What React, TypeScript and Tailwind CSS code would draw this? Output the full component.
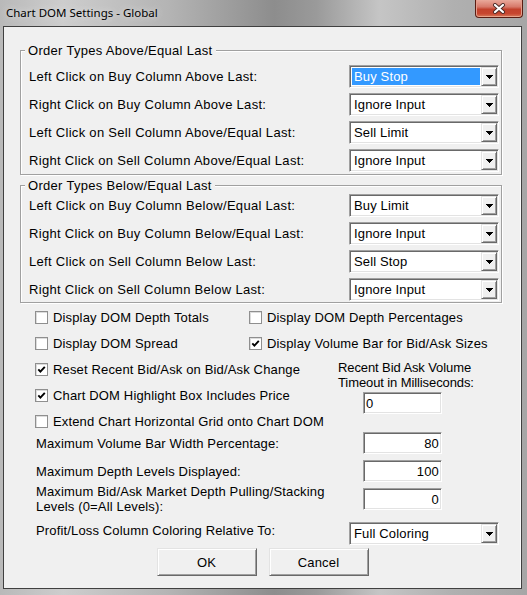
import clsx from "clsx"
import type { ReactNode } from "react"

// classic 3d edges used by the win32 controls
const sunken =
  "border border-t-[#a0a0a0] border-l-[#a0a0a0] border-r-white border-b-white shadow-[inset_1px_1px_0_#696969,inset_-1px_-1px_0_#e3e3e3]"
const raised =
  "border border-t-[#e3e3e3] border-l-[#e3e3e3] border-r-[#696969] border-b-[#696969] shadow-[inset_1px_1px_0_#fff,inset_-1px_-1px_0_#a0a0a0]"

const DownArrow = () => (
  <svg width="7" height="4" viewBox="0 0 7 4" shapeRendering="crispEdges">
    <path d="M0 0h7v1h-1v1h-1v1h-1v1h-1v-1h-1v-1h-1v-1h-1z" fill="#000" />
  </svg>
)

const Dropdown = ({ value, active }: { value: string; active?: boolean }) => (
  <div className={clsx("flex h-[23px] w-[150px] bg-white p-[1px] tracking-[0.15px]", sunken)}>
    <div className="flex flex-1 p-[1px]">
      <div
        className={clsx(
          "flex flex-1 items-center pl-[2px] leading-[15px]",
          active ? "bg-[#3399ff] text-white" : "text-black",
        )}
      >
        {value}
      </div>
    </div>
    <div className={clsx("flex w-[16px] items-center justify-center bg-[#f0f0f0]", raised)}>
      <DownArrow />
    </div>
  </div>
)

const NumberBox = ({ value, left }: { value: string; left?: boolean }) => (
  <div
    className={clsx(
      "flex h-[22px] w-[79px] items-center bg-white px-[2px] leading-[15px]",
      left ? "justify-start" : "justify-end",
      sunken,
    )}
  >
    {value}
  </div>
)

const Check = ({ label, checked }: { label: string; checked?: boolean }) => (
  <div className="flex items-center gap-[5px]">
    <span className="flex h-[13px] w-[13px] shrink-0 items-center justify-center border border-[#8f8f8f] bg-white shadow-[inset_1px_1px_0_#dcdcdc]">
      {checked && (
        <svg width="9" height="9" viewBox="0 0 9 9">
          <polyline points="1.3,4.3 3.4,6.6 7.8,1.8" fill="none" stroke="#000" strokeWidth="1.9" />
        </svg>
      )}
    </span>
    <span className="leading-[15px]">{label}</span>
  </div>
)

const Group = ({ title, className, children }: { title: string; className?: string; children: ReactNode }) => (
  <div
    className={clsx(
      "relative ml-[16px] flex w-[482px] flex-col gap-[5px] border border-[#a0a0a0] shadow-[inset_1px_1px_0_#fff,1px_1px_0_#fff]",
      className,
    )}
  >
    <span className="absolute -top-[8px] left-[4px] bg-[#f0f0f0] px-[3px] leading-[15px] tracking-[0.3px]">
      {title}
    </span>
    {children}
  </div>
)

const OrderRow = ({ label, value, active }: { label: string; value: string; active?: boolean }) => (
  <div className="flex items-center">
    <span className="w-[328px] pl-[8px] leading-[15px] tracking-[0.3px]">{label}</span>
    <Dropdown value={value} active={active} />
  </div>
)

const above = [
  ["Left Click on Buy Column Above Last:", "Buy Stop"],
  ["Right Click on Buy Column Above Last:", "Ignore Input"],
  ["Left Click on Sell Column Above/Equal Last:", "Sell Limit"],
  ["Right Click on Sell Column Above/Equal Last:", "Ignore Input"],
]

const below = [
  ["Left Click on Buy Column Below/Equal Last:", "Buy Limit"],
  ["Right Click on Buy Column Below/Equal Last:", "Ignore Input"],
  ["Left Click on Sell Column Below Last:", "Sell Stop"],
  ["Right Click on Sell Column Below Last:", "Ignore Input"],
]

const DialogButton = ({ children }: { children: ReactNode }) => (
  <button className={clsx("h-[28px] w-[100px] bg-[#f0f0f0] leading-[15px] text-black", raised)}>{children}</button>
)

export default function App() {
  return (
    <div className="flex h-[595px] w-[527px] flex-col overflow-hidden bg-[linear-gradient(90deg,#b9b9b9_0%,#cdcdcd_12%,#b4b4b4_32%,#8d8d8d_52%,#9a9a9a_60%,#c5c5c5_72%,#b0b0b0_86%,#a6a6a6_100%)] font-[family-name:'Liberation_Sans',Arial,sans-serif] text-[13px] tracking-[0.15px] text-black">
      {/* title bar */}
      <div className="flex h-[26px] shrink-0 items-start justify-between pl-[6px] pr-[4px]">
        <span className="pt-[5px] font-[family-name:'Noto_Sans',sans-serif] text-[11.5px] leading-[16px] tracking-normal [text-shadow:0_0_6px_#e8e8e8]">
          Chart DOM Settings - Global
        </span>
        <div className="flex h-[18px] w-[48px] items-center justify-center rounded-b-[4px] border border-t-0 border-[#5a1c12] bg-[linear-gradient(180deg,#e9a99b_0%,#d7796a_40%,#c2412c_55%,#c7462f_80%,#d77a5c_100%)] shadow-[inset_0_-1px_0_#e8a38a,inset_1px_0_0_#e39c8c,inset_-1px_0_0_#e39c8c]">
          <svg width="14" height="11" viewBox="0 0 14 11">
            <path d="M3 2l8 7M11 2l-8 7" stroke="#4a2a26" strokeWidth="4" strokeLinecap="round" />
            <path d="M3 2l8 7M11 2l-8 7" stroke="#fff" strokeWidth="2.2" strokeLinecap="round" />
          </svg>
        </div>
      </div>

      {/* client area */}
      <div className="mb-[6px] ml-[3px] mr-[5px] flex flex-1 flex-col border border-[#404040] bg-[#f0f0f0] shadow-[inset_-1px_0_0_#fafafa]">
        <Group title="Order Types Above/Equal Last" className="mt-[23px] pb-[2px] pt-[14px]">
          {above.map(([label, value], i) => (
            <OrderRow key={label} label={label} value={value} active={i === 0} />
          ))}
        </Group>

        <Group title="Order Types Below/Equal Last" className="mt-[10px] pb-[1px] pt-[8px]">
          {below.map(([label, value]) => (
            <OrderRow key={label} label={label} value={value} />
          ))}
        </Group>

        {/* check options */}
        <div className="ml-[31px] mt-[1px] flex flex-col">
          <div className="flex h-[26px] items-center">
            <div className="w-[214px]">
              <Check label="Display DOM Depth Totals" />
            </div>
            <Check label="Display DOM Depth Percentages" />
          </div>
          <div className="flex h-[26px] items-center">
            <div className="w-[214px]">
              <Check label="Display DOM Spread" />
            </div>
            <Check label="Display Volume Bar for Bid/Ask Sizes" checked />
          </div>
          <div className="flex">
            <div className="flex w-[303px] flex-col">
              <div className="flex h-[26px] items-center">
                <Check label="Reset Recent Bid/Ask on Bid/Ask Change" checked />
              </div>
              <div className="flex h-[26px] items-center">
                <Check label="Chart DOM Highlight Box Includes Price" checked />
              </div>
              <div className="h-[22px] pt-[7px]">
                <div className="flex h-[13px] items-center">
                  <Check label="Extend Chart Horizontal Grid onto Chart DOM" />
                </div>
              </div>
            </div>
            <div className="flex flex-col pt-[4px] leading-[15px] tracking-[-0.1px]">
              <span>Recent Bid Ask Volume</span>
              <span>Timeout in Milliseconds:</span>
              <div className="ml-[25px] mt-[2px]">
                <NumberBox value="0" left />
              </div>
            </div>
          </div>
        </div>

        {/* numeric settings */}
        <div className="ml-[32px] flex flex-col gap-[2px] leading-[15px]">
          <div className="flex h-[26px] items-center">
            <span className="w-[327px]">Maximum Volume Bar Width Percentage:</span>
            <NumberBox value="80" />
          </div>
          <div className="flex h-[26px] items-center">
            <span className="w-[327px]">Maximum Depth Levels Displayed:</span>
            <NumberBox value="100" />
          </div>
          <div className="flex h-[26px] items-center">
            <span className="w-[327px]">
              Maximum Bid/Ask Market Depth Pulling/Stacking
              <br />
              Levels (0=All Levels):
            </span>
            <NumberBox value="0" />
          </div>
          <div className="mt-[8px] flex items-start">
            <span className="w-[313px] pt-[1px]">Profit/Loss Column Coloring Relative To:</span>
            <Dropdown value="Full Coloring" />
          </div>
        </div>

        <div className="mt-[3px] flex justify-center gap-[12px]">
          <DialogButton>OK</DialogButton>
          <DialogButton>Cancel</DialogButton>
        </div>
      </div>
    </div>
  )
}
